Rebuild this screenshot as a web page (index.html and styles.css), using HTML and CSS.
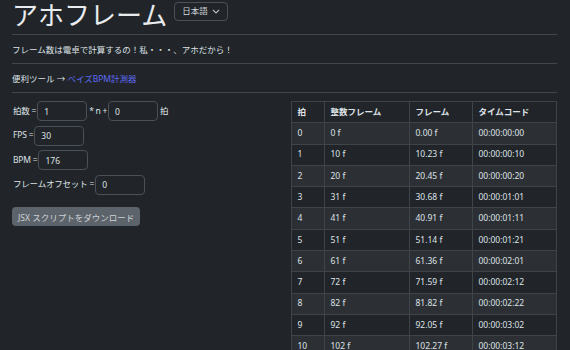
FILE: index.html
```html
<!DOCTYPE html>
<html lang="ja">
<head>
    <meta charset="UTF-8">
    <meta name="viewport" content="width=device-width, initial-scale=1.0">
    <title>アホフレーム</title>
    <link rel="stylesheet" href="styles.css">
</head>
<body>
    <div class="container">
        <div class="title-bar">
            <h1>アホフレーム</h1>
            <div class="lang">
                <span>日本語</span>
                <svg class="chevron" width="8" height="5" viewBox="0 0 8 5"><path d="M1 1l3 3 3-3" fill="none" stroke="#adb5bd" stroke-width="1.2"/></svg>
            </div>
        </div>
        <hr>
        <p class="note">フレーム数は電卓で計算するの！私・・・、アホだから！</p>
        <hr>
        <p class="note">便利ツール → <a href="#">ベイズBPM計測器</a></p>
        <hr>

        <div class="row">
            <div class="col">
                <div class="field">
                    <label>拍数 =</label>
                    <input type="text" value="1">
                    <span class="op">* n +</span>
                    <input type="text" value="0">
                    <span class="op">拍</span>
                </div>
                <div class="field">
                    <label>FPS =</label>
                    <input type="text" value="30">
                </div>
                <div class="field">
                    <label>BPM =</label>
                    <input type="text" value="176">
                </div>
                <div class="field">
                    <label>フレームオフセット =</label>
                    <input type="text" value="0">
                </div>
                <button class="download-btn" disabled>JSX スクリプトをダウンロード</button>
            </div>

            <div class="col">
                <table class="beats">
                    <thead>
                        <tr><th class="c-beat">拍</th><th class="c-int">整数フレーム</th><th class="c-frame">フレーム</th><th>タイムコード</th></tr>
                    </thead>
                    <tbody id="beat-rows"></tbody>
                </table>
            </div>
        </div>
    </div>

    <script>
        const fps = 30;
        const bpm = 176;
        const rows = document.getElementById('beat-rows');

        function pad(n) {
            return String(n).padStart(2, '0');
        }

        for (let i = 0; i <= 10; i++) {
            const frame = i * fps * 60 / bpm;
            const whole = Math.round(frame);
            const sec = Math.floor(whole / fps);
            const f = whole % fps;
            const tc = '00:00:' + pad(sec) + ':' + pad(f);
            const tr = document.createElement('tr');
            tr.innerHTML = `<td>${i}</td><td>${whole} f</td><td>${frame.toFixed(2)} f</td><td>${tc}</td>`;
            rows.appendChild(tr);
        }
    </script>
</body>
</html>
```

FILE: styles.css
```css
* {
    margin: 0;
    padding: 0;
    box-sizing: border-box;
}

body {
    font-family: 'Noto Sans', 'Noto Sans CJK JP', sans-serif;
    font-size: 8.5px;
    line-height: 1.5;
    background: #212529;
    color: #dee2e6;
}

.container {
    padding: 0 13px 0 12px;
}

.title-bar {
    display: flex;
    align-items: flex-start;
    height: 34px;
}

.title-bar h1 {
    font-size: 26px;
    font-weight: 400;
    line-height: 32px;
    margin-top: -1px;
    color: #e9ecef;
}

.lang {
    display: flex;
    align-items: center;
    justify-content: space-between;
    width: 54px;
    height: 19px;
    margin: 2px 0 0 7px;
    padding: 0 7px 0 7px;
    border: 1px solid #495057;
    border-radius: 4px;
    font-size: 8.5px;
    color: #ced4da;
}

hr {
    border: none;
    border-top: 1px solid #42474c;
}

.note {
    margin: 8px 0 6px;
    line-height: 14px;
}

.note a {
    color: #5f6af3;
    text-decoration: none;
}

.row {
    display: grid;
    grid-template-columns: 1fr 1fr;
    column-gap: 12px;
    padding-top: 8px;
}

.field {
    display: flex;
    align-items: center;
    height: 20px;
    margin-bottom: 4.5px;
}

.field label {
    margin-right: 1px;
    padding-left: 1px;
    letter-spacing: -0.2px;
}

.field input {
    width: 50px;
    height: 20px;
    padding: 0 6px;
    background: #212529;
    border: 1px solid #495057;
    border-radius: 4px;
    color: #dee2e6;
    font-family: inherit;
    font-size: 8.5px;
}

.op {
    margin: 0 1px 0 2px;
    letter-spacing: -0.3px;
}

.download-btn {
    margin-top: 8px;
    height: 19px;
    padding: 0 6px;
    background: #5c636a;
    border: none;
    border-radius: 4px;
    color: #ced2d6;
    font-family: inherit;
    font-size: 8.5px;
}

.beats {
    width: 100%;
    border-collapse: collapse;
}

.beats th,
.beats td {
    height: 21.3px;
    padding: 0 6px;
    border: 1px solid #3f4449;
    text-align: left;
    white-space: nowrap;
}

.beats th {
    font-weight: 700;
}

.beats tbody tr:nth-child(odd) {
    background: #2c3034;
}

.c-beat { width: 33px; }
.c-int { width: 85px; }
.c-frame { width: 63px; }
```
